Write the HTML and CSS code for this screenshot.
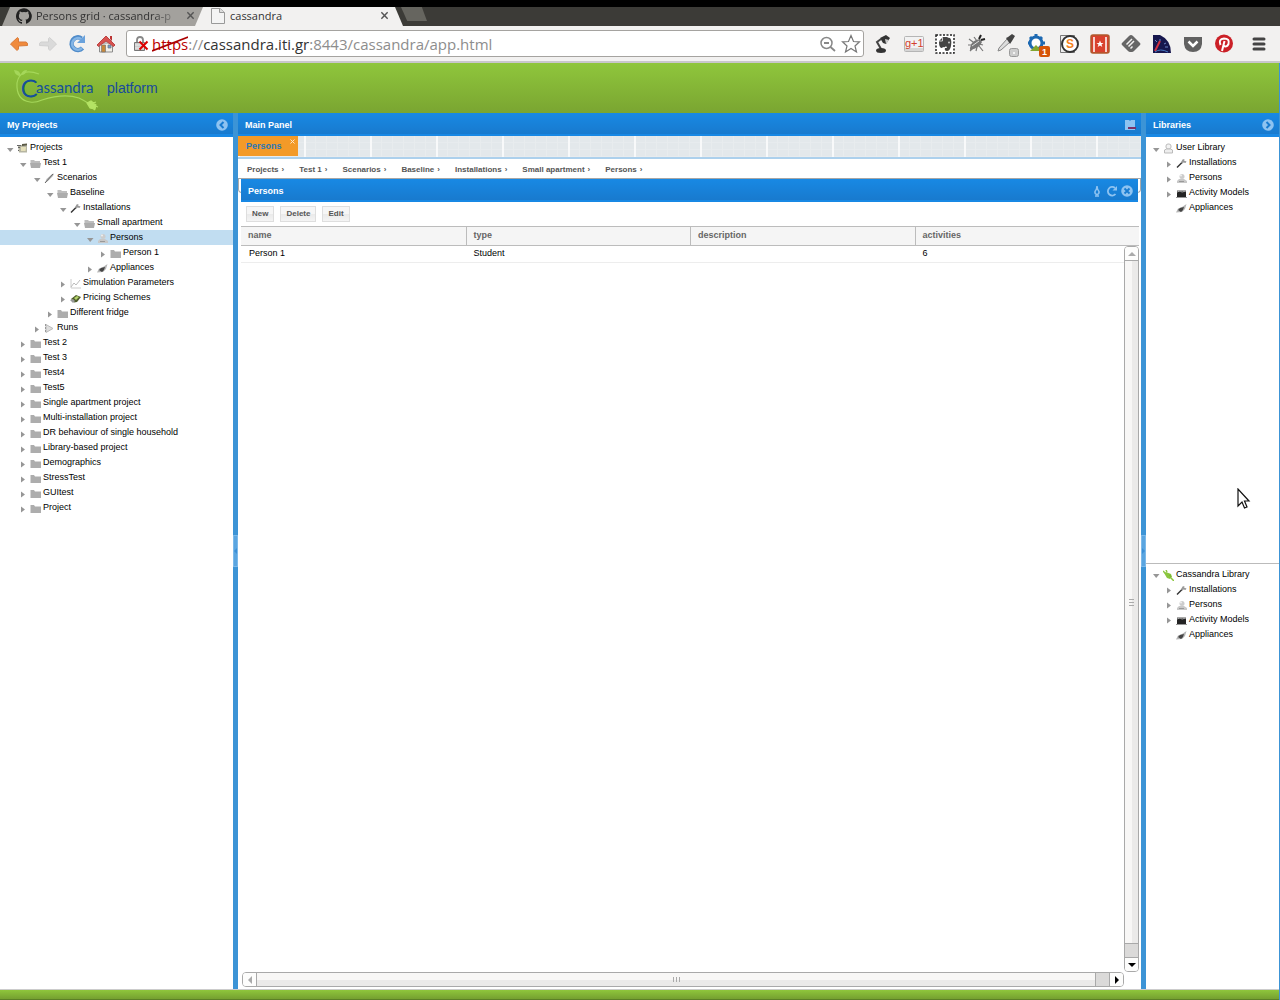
FILE: index.html
```html
<!DOCTYPE html>
<html lang="en">
<head>
<meta charset="utf-8">
<title>cassandra</title>
<link rel="stylesheet" href="styles.css">
</head>
<body>
<svg class="sprite" aria-hidden="true">
  <symbol id="open" viewBox="0 0 10 10"><path d="M2 4h6.500L5.200 8z" fill="#969696"/></symbol>
  <symbol id="shut" viewBox="0 0 10 10"><path d="M3 2.500v6L7 5.500z" fill="#969696"/></symbol>
  <symbol id="folder" viewBox="0 0 11 11"><path d="M.5 2h3.500l1 1.500h6V10h-10.500z" fill="#adadad"/></symbol>
  <symbol id="folder-open" viewBox="0 0 11 11"><path d="M.5 2h3.500l1 1h5v2h-9.500z" fill="#bdbdbd"/><path d="M0 5h11l-1 5H1z" fill="#acacac"/></symbol>
  <symbol id="projects" viewBox="0 0 11 11"><path d="M1 3l3-1 6 .500v7H2z" fill="#b6b5a2"/><path d="M0 2h4v1H0zM1 4h2v1H1zM1 7h1v1H1z" fill="#666"/><path d="M5 1l5-.500v2L5 3z" fill="#5b5a46"/><path d="M4 4h5l-.500 4H4z" fill="#e4dfb9"/></symbol>
  <symbol id="pen" viewBox="0 0 11 11"><path d="M1 10l1.500-4L8 1l2-.500L9 3 4 8z" fill="#bbb"/><path d="M1 10l8-9" stroke="#666"/></symbol>
  <symbol id="tool" viewBox="0 0 11 11"><path d="M1 9.500L6.500 4" stroke="#333" stroke-width="1.500"/><path d="M5 4.500l1.500-3 2-.500-.500 1.500 2.500 1-1 1.500-2-.500-1 1z" fill="#999"/></symbol>
  <symbol id="person" viewBox="0 0 11 11"><circle cx="6" cy="3.500" r="2.500" fill="#ccc"/><path d="M1 10V8l2-2h5l3 2v2z" fill="#c8c8c8"/><path d="M3 8.500h5" stroke="#999"/><circle cx="5" cy="2.500" r="1" fill="#eee"/></symbol>
  <symbol id="user" viewBox="0 0 11 11"><rect x="3" y="1" width="5" height="5" rx="2" fill="#f3f3f3" stroke="#bbb"/><path d="M1.500 10V7l2-1h4l2 1v3z" fill="#eee" stroke="#bbb"/></symbol>
  <symbol id="appliance" viewBox="0 0 11 11"><path d="M0 9.500l2-4 4-1.500L10.500 1 9 6 6 9z" fill="#b5b5b5"/><path d="M2 7l2-2 4-1-1 3-2 2z" fill="#444"/></symbol>
  <symbol id="chart" viewBox="0 0 11 11"><path d="M1 1v9h10" fill="none" stroke="#ccc"/><path d="M1 9l3-4 2 2 4-5" fill="none" stroke="#bbb"/></symbol>
  <symbol id="price" viewBox="0 0 11 11"><path d="M1 6l5-4 5 2-4 5-3 .500z" fill="#4e5d2b"/><path d="M4 5l3-2 2 1-3 3z" fill="#b5d56b"/><path d="M0 7l3-1 2 2-2 2z" fill="#999"/></symbol>
  <symbol id="run" viewBox="0 0 11 11"><path d="M2 1.500v8l7-4z" fill="#ddd" stroke="#bbb"/><path d="M1.500 1v9" stroke="#999" stroke-dasharray="2 1"/></symbol>
  <symbol id="activity" viewBox="0 0 11 11"><path d="M1 2h9v7H1z" fill="#242424"/><path d="M1 2.500h9M1 4l3-1 2 1 4-1" stroke="#aaa" fill="none"/><path d="M0 9.500h11" stroke="#999"/></symbol>
  <symbol id="plug" viewBox="0 0 11 11"><path d="M1 3l2-1 5 2 1 3-2 2-3-1z" fill="#8bc63e"/><path d="M2 3L0 1M4 2L3 0M8 8l3 3" stroke="#8bc63e" stroke-width="1.500"/><path d="M6 5l2 1-1 1.500" stroke="#79b534" fill="none"/></symbol>
  <symbol id="cross" viewBox="0 0 10 10"><path d="M1.500 1.500l7 7M8.500 1.500l-7 7" stroke="#555" stroke-width="1.600"/></symbol>
</svg>

<header class="browser">
  <div class="tabstrip">
    <div class="tab tab-back">
      <svg class="fav" viewBox="0 0 16 16"><path fill="#222" d="M8 .2C3.600.2 0 3.800 0 8.200c0 3.500 2.300 6.500 5.500 7.600.4.100.5-.2.5-.4v-1.500c-2.200.5-2.700-.9-2.700-.9-.4-.9-.9-1.200-.9-1.200-.7-.5.1-.5.100-.5.800.1 1.200.8 1.200.8.700 1.200 1.900.9 2.300.7.100-.5.300-.9.500-1.100-1.800-.2-3.600-.9-3.600-4 0-.9.300-1.600.8-2.100-.1-.2-.4-1 .1-2.100 0 0 .7-.2 2.200.8a7.600 7.600 0 0 1 4 0c1.500-1 2.200-.8 2.200-.8.400 1.100.2 1.900.1 2.100.5.600.8 1.300.8 2.100 0 3.100-1.900 3.700-3.700 3.900.3.300.6.800.6 1.500v2.200c0 .2.100.5.600.4A8 8 0 0 0 8 .2z"/></svg>
      <span class="tab-title fade">Persons grid · cassandra-p</span>
      <button class="bare" aria-label="Close tab"><svg width="9" height="9"><use href="#cross"/></svg></button>
    </div>
    <div class="tab tab-front">
      <svg class="fav" viewBox="0 0 16 16"><path d="M1.500 .500H10l4.500 4v11h-13z" fill="#f4f4f4" stroke="#999"/><path d="M9.500 .500v4h5" fill="#ddd" stroke="#999"/></svg>
      <span class="tab-title">cassandra</span>
      <button class="bare" aria-label="Close tab"><svg width="9" height="9"><use href="#cross"/></svg></button>
    </div>
    <button class="newtab" aria-label="New tab"></button>
  </div>
  <div class="toolbar">
    <nav class="navs">
      <button class="bare" aria-label="Back"><svg viewBox="0 0 20 20"><path d="M1.500 10L8.500 3.500l1 1V8H17q2 .500 1.500 3.500l-9 .500v3l-1.500 1.500z" fill="#f08a3c" stroke="#d97b3a"/></svg></button>
      <button class="bare" aria-label="Forward"><svg viewBox="0 0 20 20"><path d="M18.500 10L11.500 3.500l-1 1V8H3q-2 .500-1.500 3.500l9 .500v3l1.500 1.500z" fill="#dadada" stroke="#d0d0d0"/></svg></button>
      <button class="bare" aria-label="Reload"><svg viewBox="0 0 20 20"><path d="M14.500 4.500A6.300 6.300 0 1 0 15.500 14" fill="none" stroke="#4f8bc9" stroke-width="4.500"/><path d="M14 5A5.800 5.800 0 1 0 15 14" fill="none" stroke="#84b5e6" stroke-width="2.500"/><path d="M18 1v8h-8z" fill="#6aa2dc"/></svg></button>
      <button class="bare" aria-label="Home"><svg viewBox="0 0 20 20"><path d="M3.500 9h13v9h-13z" fill="#f1efe9" stroke="#8b8b8b"/><path d="M1 11L10 2l9 9-1.500 1.500L10 7l-7.500 5.500z" fill="#d8524f" stroke="#b44"/><path d="M14 2h2v5l-2-2z" fill="#b33"/><path d="M5.500 11h4v7h-4z" fill="#c8883a" stroke="#777" stroke-width=".7"/><path d="M12 11h3v3h-3z" fill="#6d9bd1" stroke="#777" stroke-width=".7"/></svg></button>
    </nav>
    <div class="address">
      <svg class="lock" viewBox="0 0 16 16"><path d="M4 7V4q0-3 3-3t3 3v3" fill="none" stroke="#888" stroke-width="1.800"/><path d="M1.500 6.500h10v8h-10z" fill="#ccc" stroke="#777"/><path d="M2 9h9M2 12h9" stroke="#eee"/><path d="M6.500 5.500l8 8M14.500 5.500l-8 8" stroke="#d00" stroke-width="2"/></svg>
      <div class="url" role="textbox" aria-label="Address"><span class="scheme">https<svg viewBox="0 0 36 16" preserveAspectRatio="none"><path d="M0 15L36 1" stroke="#a00" stroke-width="1.800"/></svg></span>://<span class="host">cassandra.iti.gr</span>:8443/cassandra/app.html</div>
      <svg class="find" viewBox="0 0 16 16"><circle cx="6.500" cy="7" r="5.500" fill="none" stroke="#888" stroke-width="1.500"/><path d="M4 7h5M10.500 11l4.500 4" stroke="#888" stroke-width="1.800"/></svg>
      <svg class="star" viewBox="0 0 20 20"><path d="M10 1.500l2.500 6 6 .300-4.500 4.200 1.500 6L10 14.500 4.500 18 6 12 1.500 7.800l6-.300z" fill="#fff" stroke="#777" stroke-width="1.200"/></svg>
    </div>
    <div class="extensions">
      <svg viewBox="0 0 20 20"><path d="M7 4l6-3 4 3-4 6-3-1z" fill="#333"/><path d="M12 5l4 1-3 4z" fill="#ccc"/><path d="M8 5L4 8l4 7" fill="none" stroke="#444" stroke-width="2"/><ellipse cx="8" cy="16.500" rx="5" ry="2.500" fill="#333"/></svg>
      <svg viewBox="0 0 20 20"><rect x=".500" y="2.500" width="19" height="15" rx="1" fill="#f2f2f2" stroke="#b5b5b5"/><path d="M1 14h18v3H1z" fill="#d5d5d5"/><text x="1" y="13" class="plusone">g+1</text></svg>
      <svg viewBox="0 0 20 20"><rect x="1" y="1" width="18" height="18" fill="#fff" stroke="#222" stroke-width="1.500" stroke-dasharray="2 1.500"/><path d="M4 8V7l4-4h4q1 1 3 1 2 2 1 8-1 5-4 5-3 0-2-3h2l-1-2q-1 2-3 1l-1 1q-3 0-3-6z" fill="#444"/><path d="M4 7h3.500V3.500" stroke="#eee" stroke-width=".8" fill="none"/><circle cx="14" cy="8.500" r="1" fill="#ccc"/></svg>
      <svg viewBox="0 0 20 20"><path d="M3 5l4 3M2 11h5M4 17l4-4M8 3l3 4M10 17l1-4M17 11l-4-1M17 17l-4-5" stroke="#777" stroke-width="1.200"/><path d="M4 14q1-8 10-9l2 3q-2 6-12 8z" fill="#777"/><path d="M13 5l2-4M15 6l4-1" stroke="#222" stroke-width="2"/><path d="M6 12l7-5" stroke="#ddd"/></svg>
      <svg viewBox="0 0 20 20"><path d="M1 17l1-3 8-9 3 3-9 8z" fill="#ddd" stroke="#888"/><path d="M9 4l2-1 4-3 3 2-3 5-2 3z" fill="#444"/><rect x="12.500" y="14.500" width="9" height="8" rx="2" fill="#ccc" stroke="#999"/><path d="M16 19h2" stroke="#fff" stroke-width="1.500"/></svg>
      <svg viewBox="0 0 20 20"><circle cx="8" cy="9" r="6" fill="#fff" stroke="#1d69b2" stroke-width="3"/><path d="M8 0v3M0 9h3M13 9h4M2 3l2 2M14 3l-2 2" stroke="#1d69b2" stroke-width="3"/><path d="M0 19v-3h15v3z" fill="#f2f1f0"/><path d="M2 17l6-6 6 6z" fill="#83a630"/><rect x="11" y="12" width="11" height="11" rx="2" fill="#d65508"/><text x="14" y="21" class="count">1</text></svg>
      <svg viewBox="0 0 20 20"><path d="M1.500 1.500h14v17h-14z" fill="#eee" stroke="#777"/><circle cx="11" cy="10" r="8" fill="#fff" stroke="#333" stroke-width="2"/><text x="7" y="14" class="essy">S</text></svg>
      <svg viewBox="0 0 20 20"><rect x="1" y="1" width="18" height="18" rx="2" fill="#d9412e" stroke="#b0592c" stroke-width="1.500"/><path d="M4 3v15M16 3v15" stroke="#fff" stroke-width="1.500"/><path d="M10 6.500l1 2.500h2.500l-2 1.500.8 2.500L10 11.500 7.700 13l.8-2.500-2-1.500H9z" fill="#fff"/></svg>
      <svg viewBox="0 0 20 20"><path d="M10 1q1 0 2 1l7 7q1 1 0 2l-6 6q-1 1-2 1H9q-1 0-2-1l-6-6q-1-1 0-2l7-7q1-1 2-1z" fill="#666"/><path d="M5.500 10.500L11 5M7.500 12.500L13 7M9.500 14.500l2-2" stroke="#f2f1f0" stroke-width="1.500"/></svg>
      <svg viewBox="0 0 20 20"><path d="M1 1h7q11 5 11 18H1z" fill="#17174e"/><path d="M3 6l2 2M8 5v2M14 9l-2 1M16 13h-3" stroke="#6d85c7"/><path d="M3 17L8 7" stroke="#d12f42" stroke-width="2"/><path d="M3 18q5-4 13 0" stroke="#4779c2" fill="none"/></svg>
      <svg viewBox="0 0 20 20"><path d="M1 3h18v7q-1 8-9 8t-9-8z" fill="#616161"/><path d="M5.500 7.500l4.500 4.500 4.500-4.500" fill="none" stroke="#fff" stroke-width="2.500"/></svg>
      <svg viewBox="0 0 20 20"><circle cx="10" cy="9.500" r="9" fill="#cb2027"/><path d="M6.500 11Q4 5 10 4.500q6 0 4.500 5.500-2 4-5 1.500M10.500 7L8 17" fill="none" stroke="#fff" stroke-width="2"/></svg>
    </div>
    <button class="bare menu" aria-label="Menu"><svg viewBox="0 0 14 14"><path d="M2 2h10M2 7h10M2 12h10" stroke="#444" stroke-width="3" stroke-linecap="round"/></svg></button>
  </div>
</header>

<div class="app">
  <div class="banner">
    <svg class="logo" viewBox="0 0 90 46" role="img" aria-label="Cassandra">
      <path d="M27 9Q8 2 5 18q-1 17 13 19 5 1 12-2 22-7 37-2 6 3 9 5" fill="none" stroke="#a5d75a" stroke-width="1.200"/>
      <path d="M2 5q6 0 7 6Q3 11 2 5zM9 10q1-5 6-5-1 5-6 5z" fill="#a5d75a"/>
      <path d="M75 38l4-2 5 4-1 4-5-1zM81 38l3-1M83 41l3 1M81 44l2 1" fill="#b4e364" stroke="#b4e364" stroke-width="1.200"/>
      <text x="9" y="32" class="logo-c">C</text><text x="24" y="28" class="logo-rest">assandra</text>
    </svg>
    <span class="product">platform</span>
  </div>

  <div class="workspace">
    <aside class="side side-left">
      <div class="titlebar"><h2>My Projects</h2><button class="bare" aria-label="Collapse"><svg width="12" height="12" viewBox="0 0 12 12"><circle cx="6" cy="6" r="5.800" fill="#8ec3f1"/><path d="M7.500 3l-3 3 3 3" stroke="#187bd0" stroke-width="2" fill="none"/></svg></button></div>
      <ul class="tree">
        <li class="l0"><svg><use href="#open"/></svg><svg><use href="#projects"/></svg><a href="#">Projects</a></li>
        <li class="l1"><svg><use href="#open"/></svg><svg><use href="#folder-open"/></svg><a href="#">Test 1</a></li>
        <li class="l2"><svg><use href="#open"/></svg><svg><use href="#pen"/></svg><a href="#">Scenarios</a></li>
        <li class="l3"><svg><use href="#open"/></svg><svg><use href="#folder-open"/></svg><a href="#">Baseline</a></li>
        <li class="l4"><svg><use href="#open"/></svg><svg><use href="#tool"/></svg><a href="#">Installations</a></li>
        <li class="l5"><svg><use href="#open"/></svg><svg><use href="#folder-open"/></svg><a href="#">Small apartment</a></li>
        <li class="l6 selected"><svg><use href="#open"/></svg><svg><use href="#person"/></svg><a href="#">Persons</a></li>
        <li class="l7"><svg><use href="#shut"/></svg><svg><use href="#folder"/></svg><a href="#">Person 1</a></li>
        <li class="l6"><svg><use href="#shut"/></svg><svg><use href="#appliance"/></svg><a href="#">Appliances</a></li>
        <li class="l4"><svg><use href="#shut"/></svg><svg><use href="#chart"/></svg><a href="#">Simulation Parameters</a></li>
        <li class="l4"><svg><use href="#shut"/></svg><svg><use href="#price"/></svg><a href="#">Pricing Schemes</a></li>
        <li class="l3"><svg><use href="#shut"/></svg><svg><use href="#folder"/></svg><a href="#">Different fridge</a></li>
        <li class="l2"><svg><use href="#shut"/></svg><svg><use href="#run"/></svg><a href="#">Runs</a></li>
        <li class="l1"><svg><use href="#shut"/></svg><svg><use href="#folder"/></svg><a href="#">Test 2</a></li>
        <li class="l1"><svg><use href="#shut"/></svg><svg><use href="#folder"/></svg><a href="#">Test 3</a></li>
        <li class="l1"><svg><use href="#shut"/></svg><svg><use href="#folder"/></svg><a href="#">Test4</a></li>
        <li class="l1"><svg><use href="#shut"/></svg><svg><use href="#folder"/></svg><a href="#">Test5</a></li>
        <li class="l1"><svg><use href="#shut"/></svg><svg><use href="#folder"/></svg><a href="#">Single apartment project</a></li>
        <li class="l1"><svg><use href="#shut"/></svg><svg><use href="#folder"/></svg><a href="#">Multi-installation project</a></li>
        <li class="l1"><svg><use href="#shut"/></svg><svg><use href="#folder"/></svg><a href="#">DR behaviour of single household</a></li>
        <li class="l1"><svg><use href="#shut"/></svg><svg><use href="#folder"/></svg><a href="#">Library-based project</a></li>
        <li class="l1"><svg><use href="#shut"/></svg><svg><use href="#folder"/></svg><a href="#">Demographics</a></li>
        <li class="l1"><svg><use href="#shut"/></svg><svg><use href="#folder"/></svg><a href="#">StressTest</a></li>
        <li class="l1"><svg><use href="#shut"/></svg><svg><use href="#folder"/></svg><a href="#">GUItest</a></li>
        <li class="l1"><svg><use href="#shut"/></svg><svg><use href="#folder"/></svg><a href="#">Project</a></li>
      </ul>
    </aside>

    <div class="splitter"><button aria-label="Collapse My Projects"><svg viewBox="0 0 3 6"><path d="M3 0v6L0 3z" fill="#3b8fd6"/></svg></button></div>

    <main class="center">
      <div class="titlebar"><h2>Main Panel</h2><button class="bare" aria-label="Close all"><svg width="12" height="12" viewBox="0 0 12 12"><path d="M1 1h4l1 1 1-1h4v10H1z" fill="#8ec3f1"/><path d="M4 8h8v2H4z" fill="#7b3168"/></svg></button></div>
      <div class="tabs">
        <div class="page-tab"><a href="#">Persons</a><button class="bare" aria-label="Close Persons"><svg width="5" height="5" viewBox="0 0 5 5"><path d="M.500 .500l4 4M4.500 .500l-4 4" stroke="#fde6c8"/></svg></button></div>
      </div>
      <nav class="crumbs" aria-label="Path">
        <a href="#">Projects<b>›</b></a><a href="#">Test 1<b>›</b></a><a href="#">Scenarios<b>›</b></a><a href="#">Baseline<b>›</b></a><a href="#">Installations<b>›</b></a><a href="#">Small apartment<b>›</b></a><a href="#">Persons<b>›</b></a>
      </nav>
      <section class="grid-panel">
        <div class="titlebar"><h2>Persons</h2>
          <div class="tools">
            <button class="bare" aria-label="Pin"><svg width="12" height="12" viewBox="0 0 12 12"><path d="M6 1q0 3 2 5.500Q8.500 9 6 9.500 3.500 9 4 6.500 6 4 6 1zM4 11h4" fill="none" stroke="#8ec3f1" stroke-width="1.500"/></svg></button>
            <button class="bare" aria-label="Refresh"><svg width="12" height="12" viewBox="0 0 12 12"><path d="M9 3A4.300 4.300 0 1 0 9.500 9" fill="none" stroke="#8ec3f1" stroke-width="1.800"/><path d="M11 1v4.500H6.500z" fill="#8ec3f1"/></svg></button>
            <button class="bare" aria-label="Close"><svg width="12" height="12" viewBox="0 0 12 12"><circle cx="6" cy="6" r="5.800" fill="#8ec3f1"/><path d="M3.500 3.500l5 5M8.500 3.500l-5 5" stroke="#187bd0" stroke-width="1.800"/></svg></button>
          </div>
        </div>
        <div class="actions"><button>New</button><button>Delete</button><button>Edit</button></div>
        <div class="grid">
          <table>
            <thead><tr><th>name</th><th>type</th><th>description</th><th>activities</th></tr></thead>
            <tbody><tr><td>Person 1</td><td>Student</td><td></td><td>6</td></tr></tbody>
          </table>
          <div class="scroll vertical">
            <button aria-label="Scroll up"><svg viewBox="0 0 8 8"><path d="M0 6h8L4 2z" fill="#aaa"/></svg></button>
            <div class="thumb"></div><div class="track"></div>
            <button aria-label="Scroll down"><svg viewBox="0 0 8 8"><path d="M0 2h8L4 6z" fill="#000"/></svg></button>
          </div>
          <div class="scroll horizontal">
            <button aria-label="Scroll left"><svg viewBox="0 0 8 8"><path d="M6 0v8L2 4z" fill="#aaa"/></svg></button>
            <div class="thumb"></div><div class="track"></div>
            <button aria-label="Scroll right"><svg viewBox="0 0 8 8"><path d="M2 0v8l4-4z" fill="#000"/></svg></button>
          </div>
        </div>
      </section>
    </main>

    <div class="splitter"><button aria-label="Collapse Libraries"><svg viewBox="0 0 3 6"><path d="M0 0v6l3-3z" fill="#3b8fd6"/></svg></button></div>

    <aside class="side side-right">
      <div class="titlebar"><h2>Libraries</h2><button class="bare" aria-label="Collapse"><svg width="12" height="12" viewBox="0 0 12 12"><circle cx="6" cy="6" r="5.800" fill="#8ec3f1"/><path d="M4.500 3l3 3-3 3" stroke="#187bd0" stroke-width="2" fill="none"/></svg></button></div>
      <div class="library library-user">
        <ul class="tree">
          <li class="l0"><svg><use href="#open"/></svg><svg><use href="#user"/></svg><a href="#">User Library</a></li>
          <li class="l1"><svg><use href="#shut"/></svg><svg><use href="#tool"/></svg><a href="#">Installations</a></li>
          <li class="l1"><svg><use href="#shut"/></svg><svg><use href="#person"/></svg><a href="#">Persons</a></li>
          <li class="l1"><svg><use href="#shut"/></svg><svg><use href="#activity"/></svg><a href="#">Activity Models</a></li>
          <li class="l1"><svg></svg><svg><use href="#appliance"/></svg><a href="#">Appliances</a></li>
        </ul>
      </div>
      <div class="library">
        <ul class="tree">
          <li class="l0"><svg><use href="#open"/></svg><svg><use href="#plug"/></svg><a href="#">Cassandra Library</a></li>
          <li class="l1"><svg><use href="#shut"/></svg><svg><use href="#tool"/></svg><a href="#">Installations</a></li>
          <li class="l1"><svg><use href="#shut"/></svg><svg><use href="#person"/></svg><a href="#">Persons</a></li>
          <li class="l1"><svg><use href="#shut"/></svg><svg><use href="#activity"/></svg><a href="#">Activity Models</a></li>
          <li class="l1"><svg></svg><svg><use href="#appliance"/></svg><a href="#">Appliances</a></li>
        </ul>
      </div>
    </aside>
  </div>
  <footer class="foot"></footer>
</div>

<svg class="pointer" width="14" height="22" viewBox="0 0 14 22"><path d="M1 1v17l4-4 2.500 6 2.500-1-2.500-6H12z" fill="#fff" stroke="#111" stroke-width="1.200"/></svg>
</body>
</html>
```
FILE: styles.css
```css
* { box-sizing: border-box; }

body {
  margin: 0;
  min-height: 100vh;
  display: flex;
  flex-direction: column;
  font: 9px/15px "Liberation Sans", Arial, sans-serif;
  color: #000;
  background: #fff;
}

a { color: inherit; text-decoration: none; }
button { font: inherit; padding: 0; }
h2 { margin: 0; font-size: 9px; }
.sprite { position: absolute; width: 0; height: 0; }
.bare { display: flex; align-items: center; justify-content: center; border: 0; background: none; }

/* browser frame */
.browser { font-family: "Open Sans", "Noto Sans", sans-serif; }

.tabstrip {
  display: flex;
  height: 26px;
  border-top: 7px solid #000;
  background: #3c3b37;
  overflow: hidden;
}

.tab { display: flex; align-items: center; gap: 4px; height: 19px; width: 208px; padding: 0 14px 2px; }
.tab-back {
  margin-right: -15px;
  margin-left: 2px;
  background: #a3a19d;
  clip-path: polygon(8px 0, 100% 0, 100% 100%, 0 100%);
}
.tab-front { padding-left: 15px; background: #f2f1f0; clip-path: polygon(8px 0, 200px 0, 100% 100%, 0 100%); }
.fav { width: 16px; height: 16px; flex: none; }
.tab-title { flex: 1; font-size: 11px; line-height: 16px; color: #333; white-space: nowrap; }
.tab-back .tab-title { flex: 0 0 146px; }
.fade { mask-image: linear-gradient(90deg, #000 80%, transparent); }
.newtab { width: 26px; height: 14px; margin-left: -2px; border: 0; background: #66655f; clip-path: polygon(0 0, 80% 0, 100% 100%, 24% 100%); }

.toolbar {
  display: flex;
  align-items: center;
  height: 37px;
  padding: 0 11px 0 4px;
  background: #f2f1f0;
  border-bottom: 2px solid #c9c7cb;
}
.navs { display: flex; margin-right: 6px; }
.navs .bare { width: 29px; }
.navs svg { width: 20px; height: 20px; }

.address {
  flex: 1;
  display: flex;
  align-items: center;
  height: 27px;
  padding: 0 2px 0 6px;
  border: 1px solid #a5a3a0;
  border-radius: 3px;
  background: #fff;
}
.lock { width: 16px; height: 16px; margin-right: 3px; }
.url { flex: 1; font-size: 15px; line-height: 20px; color: #8d8d8d; white-space: nowrap; }
.scheme { position: relative; color: #b00; }
.scheme svg { position: absolute; left: 0; top: 2px; width: 100%; height: 16px; }
.host { color: #333; }
.find { width: 16px; height: 16px; margin-right: 5px; }
.star { width: 20px; height: 20px; }

.extensions { display: flex; padding-left: 3px; }
.extensions svg { width: 20px; height: 20px; margin: 0 5px 0 6px; overflow: visible; }
.plusone { font: 11px "Liberation Sans", sans-serif; fill: #d33f2e; }
.count { font: bold 9px "Liberation Sans", sans-serif; fill: #fff; }
.essy { font: bold 12px "Liberation Sans", sans-serif; fill: #f58220; }
.menu { width: 14px; margin-left: 13px; margin-right: 3px; }
.menu svg { width: 14px; height: 14px; }

/* application frame */
.app { flex: 1; display: flex; flex-direction: column; border-right: 1px solid #3c94d6; }

.banner {
  display: flex;
  align-items: center;
  height: 50px;
  padding-left: 12px;
  background: linear-gradient(#8fc63c, #7aa531);
}
.logo { width: 90px; height: 46px; margin-right: 5px; overflow: visible; }
.logo-c { font: 300 24px Lato, sans-serif; fill: #14509a; stroke: #14509a; stroke-width: 1px; }
.logo-rest { font: 15px Lato, sans-serif; fill: #14509a; }
.product { font-size: 14px; line-height: 18px; color: #174a9c; }

.workspace { flex: 1; display: flex; }
.side { display: flex; flex-direction: column; flex: none; }
.side-left { width: 233px; }
.side-right { width: 133px; }
.center { flex: 1; display: flex; flex-direction: column; min-width: 0; }

.titlebar {
  display: flex;
  align-items: center;
  justify-content: space-between;
  height: 24px;
  padding: 0 5px 0 7px;
  color: #fff;
  background: linear-gradient(#1889e4, #187ace 21px, #1888e4 21px);
}
.center .titlebar { height: 23px; padding-top: 1px; }
.tools { display: flex; gap: 3px; }

.tree { list-style: none; margin: 0; padding: 3px 0 0; }
.tree li { display: flex; align-items: center; height: 15px; padding-left: 5px; white-space: nowrap; }
.tree svg { flex: none; width: 11px; height: 11px; margin: 2px 2px 0 0; }
.tree svg:first-child { width: 10px; height: 10px; }
.tree .l1 { padding-left: 18px; }
.tree .l2 { padding-left: 32px; }
.tree .l3 { padding-left: 45px; }
.tree .l4 { padding-left: 58px; }
.tree .l5 { padding-left: 72px; }
.tree .l6 { padding-left: 85px; }
.tree .l7 { padding-left: 98px; }
.tree .selected { background: #c1ddf1; }

.library { flex: 1; }
.library-user { border-bottom: 1px solid #bbb; }

.splitter { display: flex; align-items: center; width: 5px; flex: none; background: #3c94d6; }
.splitter button { display: flex; align-items: center; width: 5px; height: 32px; border: 1px solid #7bb9ea; background: #5aa5e0; }
.splitter svg { width: 3px; height: 6px; }

.tabs {
  display: flex;
  height: 23px;
  border-bottom: 2px solid #acd0ec;
  background:
    linear-gradient(90deg, #f8f9fa 2px, transparent 2px) 0 0 / 66px 100%,
    linear-gradient(90deg, #e8ecee 1px, transparent 1px) 0 0 / 11px 100%,
    repeating-linear-gradient(#e3e8eb 0 6px, #e7ebee 6px 7px);
}
.page-tab {
  display: flex;
  justify-content: space-between;
  align-items: flex-start;
  width: 60px;
  height: 20px;
  padding: 3px 3px 0 8px;
  font-weight: bold;
  color: #2a78b8;
  background: #f39a28;
}

.crumbs {
  display: flex;
  align-items: center;
  gap: 15px;
  height: 20px;
  padding: 2px 9px 0;
  font-size: 8px;
  font-weight: bold;
  color: #555;
  border-bottom: 1px solid #a6a6a6;
}
.crumbs b { margin-left: 3px; }

.grid-panel { position: relative; flex: 1; display: flex; flex-direction: column; padding: 0 3px 2px; }
.grid-panel::before {
  content: "";
  position: absolute;
  inset: 0 0 auto;
  height: 13px;
  border: 1px solid #aaa;
  border-top: 0;
  border-radius: 0 0 4px 4px;
}
.grid-panel .titlebar { position: relative; }

.actions { display: flex; align-items: center; gap: 6px; height: 24px; padding-left: 5px; }
.actions button {
  height: 16px;
  padding: 0 5px;
  border: 1px solid #dedede;
  font-size: 8px;
  line-height: 12px;
  font-weight: bold;
  color: #555;
  background: linear-gradient(#f6f6f6 50%, #eaeaea 50%, #f4f4f4);
}

.grid { flex: 1; display: grid; grid-template: 1fr 15px / 1fr 15px; margin-right: -1px; }
table { grid-area: 1 / 1 / 2 / 3; align-self: start; width: 100%; border-collapse: separate; border-spacing: 0; table-layout: fixed; }
th, td { text-align: left; }
th {
  height: 20px;
  padding: 0 7px 2px;
  line-height: 16px;
  color: #666;
  border: solid #bcbcbc;
  border-width: 1px 0 1px 1px;
  background: #f5f5f5;
}
th:first-child { border-left: 0; }
td { height: 17px; padding: 0 8px 1px; border-bottom: 1px solid #ededed; }

.scroll { display: flex; border: 1px solid #a9a9a9; border-radius: 4px; background: #fff; overflow: hidden; }
.scroll button { display: flex; align-items: center; justify-content: center; flex: 0 0 13px; border: 0; background: #fdfdfc; }
.scroll svg { width: 8px; height: 8px; }
.thumb { flex: 1; display: flex; align-items: center; justify-content: center; border: 0 solid #a9a9a9; }
.thumb::after { content: ""; }
.track { flex: 0 0 14px; background: #dbdad9; border: 0 solid #a9a9a9; }
.vertical { grid-area: 1 / 2; flex-direction: column; margin-top: 20px; }
.vertical .thumb, .vertical .track { border-bottom-width: 1px; }
.vertical .thumb { border-top-width: 1px; background: linear-gradient(90deg, #f8f7f6 50%, #ebeae9 50%); }
.vertical .thumb::after { width: 5px; height: 7px; background: repeating-linear-gradient(#aaa 0 1px, transparent 1px 3px); }
.horizontal { grid-area: 2 / 1; margin-left: 1px; }
.horizontal .thumb, .horizontal .track { border-right-width: 1px; }
.horizontal .thumb { border-left-width: 1px; background: linear-gradient(#f8f7f6 50%, #ebeae9 50%); }
.horizontal .thumb::after { width: 7px; height: 5px; background: repeating-linear-gradient(90deg, #aaa 0 1px, transparent 1px 3px); }

.foot { height: 11px; border-top: 1px solid #ccc; border-bottom: 1px solid #5c8026; background: linear-gradient(#8fc63c, #75a030); }

.pointer { position: absolute; left: 1237px; top: 488px; }
```
